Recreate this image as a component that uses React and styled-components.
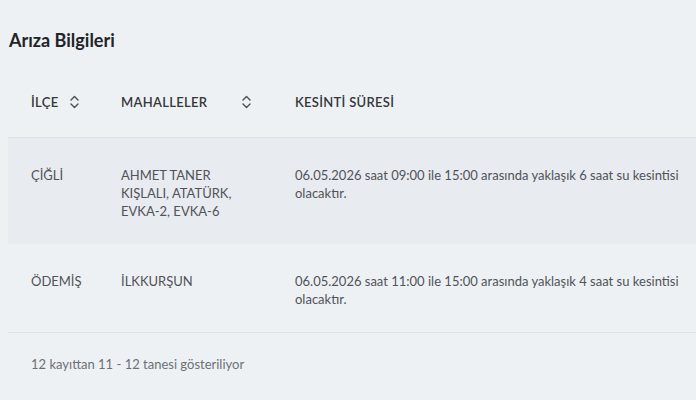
import React from 'react';
import styled, { createGlobalStyle } from 'styled-components';

const GlobalStyle = createGlobalStyle`
  html, body {
    margin: 0;
    padding: 0;
    background: #eef1f4;
  }
  body {
    font-family: Lato, "Noto Sans", sans-serif;
    color: #4a4d52;
  }
`;

const Page = styled.div`
  width: 696px;
  height: 400px;
  overflow: hidden;
  padding: 0 0 0 8px;
  box-sizing: border-box;
`;

const Title = styled.h2`
  margin: 0;
  padding: 29px 0 0 1px;
  font-size: 18px;
  line-height: 22px;
  font-weight: 700;
  color: #222428;
`;

const Table = styled.table`
  width: 100%;
  border-collapse: collapse;
  margin-top: 22px;
  table-layout: fixed;
`;

const HeadCell = styled.th`
  position: relative;
  box-sizing: border-box;
  width: ${p => p.$width || 'auto'};
  padding: 20px 23px 26px;
  text-align: left;
  font-size: 13px;
  line-height: 18px;
  font-weight: 600;
  letter-spacing: 0.3px;
  color: #34373b;
  border-bottom: 1px solid #dcdfe3;
`;

const SortIcon = styled.span`
  position: absolute;
  right: ${p => p.$right}px;
  top: 21px;
  width: 9px;
  height: 16px;
  display: flex;
  align-items: center;
  justify-content: center;
  color: #4a4d52;
`;

const Row = styled.tr`
  background: ${p => (p.$striped ? '#e8ebef' : 'transparent')};
  border-bottom: ${p => (p.$last ? '1px solid #dcdfe3' : 'none')};
`;

const Cell = styled.td`
  box-sizing: border-box;
  padding: 28px ${p => p.$pr || 23}px 24px 23px;
  vertical-align: top;
  font-size: 13px;
  line-height: 18px;
  color: #505358;
`;

const Footer = styled.div`
  padding: 22px 0 0 23px;
  font-size: 13px;
  line-height: 18px;
  color: #6c7075;
`;

const Chevrons = () => (
  <svg width="9" height="14" viewBox="0 0 9 14" fill="none" stroke="currentColor" strokeWidth="1.4" strokeLinecap="round" strokeLinejoin="round">
    <path d="M1 5 L4.5 1.5 L8 5" />
    <path d="M1 9 L4.5 12.5 L8 9" />
  </svg>
);

const rows = [
  {
    ilce: 'ÇİĞLİ',
    mahalle: 'AHMET TANER KIŞLALI, ATATÜRK, EVKA-2, EVKA-6',
    sure: '06.05.2026 saat 09:00 ile 15:00 arasında yaklaşık 6 saat su kesintisi olacaktır.'
  },
  {
    ilce: 'ÖDEMİŞ',
    mahalle: 'İLKKURŞUN',
    sure: '06.05.2026 saat 11:00 ile 15:00 arasında yaklaşık 4 saat su kesintisi olacaktır.'
  }
];

export default function App() {
  return (
    <Page>
      <GlobalStyle />
      <Title>Arıza Bilgileri</Title>
      <Table>
        <thead>
          <tr>
            <HeadCell $width="90px">
              İLÇE
              <SortIcon $right={19}><Chevrons /></SortIcon>
            </HeadCell>
            <HeadCell $width="174px">
              MAHALLELER
              <SortIcon $right={21}><Chevrons /></SortIcon>
            </HeadCell>
            <HeadCell>KESİNTİ SÜRESİ</HeadCell>
          </tr>
        </thead>
        <tbody>
          {rows.map((r, i) => (
            <Row key={r.ilce} $striped={i % 2 === 0} $last={i === rows.length - 1}>
              <Cell>{r.ilce}</Cell>
              <Cell>{r.mahalle}</Cell>
              <Cell $pr={10}>{r.sure}</Cell>
            </Row>
          ))}
        </tbody>
      </Table>
      <Footer>12 kayıttan 11 - 12 tanesi gösteriliyor</Footer>
    </Page>
  );
}
